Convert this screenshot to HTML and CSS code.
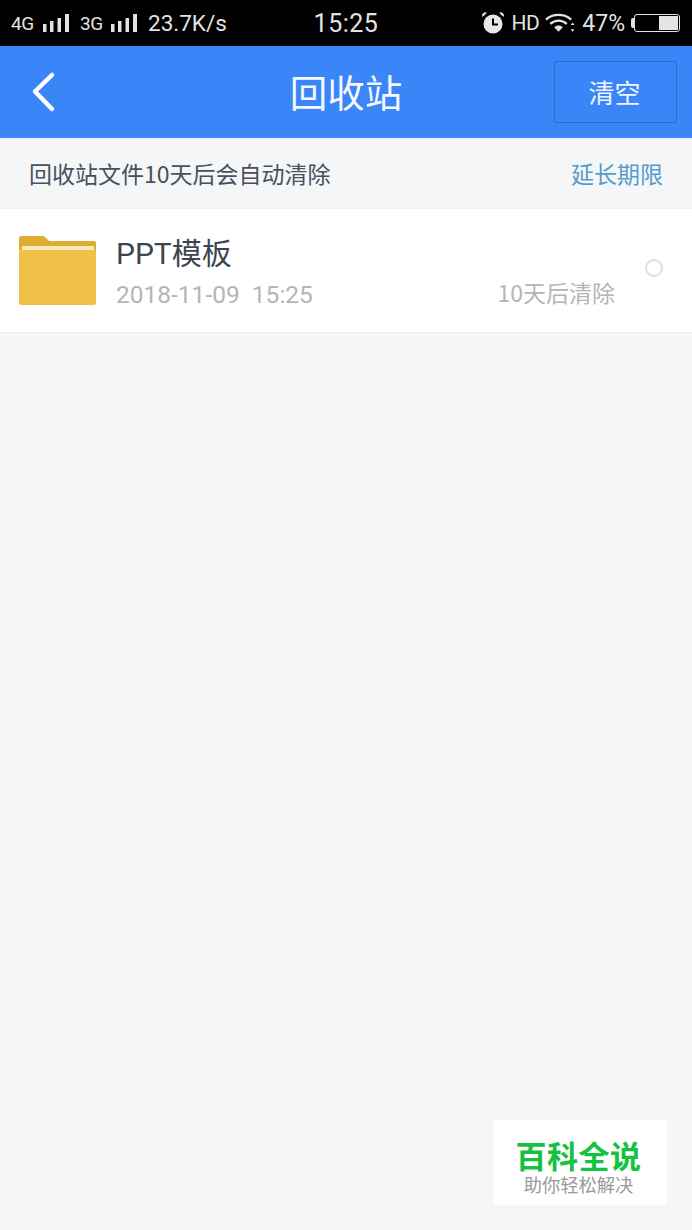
FILE: index.html
```html
<!DOCTYPE html>
<html lang="zh-CN">
  <head>
    <meta charset="UTF-8" />
    <meta name="viewport" content="width=device-width, initial-scale=1.0" />
    <title>回收站</title>
    <link rel="stylesheet" href="styles.css">
  </head>
  <body>
    <div class="status-bar">
      <div class="status-left">
        <span class="net">4G</span>
        <svg class="signal" width="27" height="18" viewBox="0 0 27 18"><path d="M1 10h3.500v8H1zM8 7h3.500v11H8zM15.500 4H19v14h-3.500zM23 0h4v18h-4z" fill="#e2e2e2"/></svg>
        <span class="net net-second">3G</span>
        <svg class="signal" width="27" height="18" viewBox="0 0 27 18"><path d="M1 10h3.500v8H1zM8 7h3.500v11H8zM15.500 4H19v14h-3.500zM23 0h4v18h-4z" fill="#e2e2e2"/></svg>
        <span class="speed">23.7K/s</span>
      </div>
      <div class="status-time">15:25</div>
      <div class="status-right">
        <svg width="24" height="24" viewBox="0 0 24 24"><circle cx="12" cy="13" r="9.500" fill="#e8e8e8"/><path d="M12 7.500V13.500H17" fill="none" stroke="#000" stroke-width="2"/><path d="M1.500 6 6 1.800 3.500 1.200 1 3.500zM22.500 6 18 1.800 20.500 1.200 23 3.500z" fill="#e8e8e8"/></svg>
        <span class="hd">HD</span>
        <svg width="30" height="22" viewBox="0 0 31 22"><g fill="none" stroke="#e2e2e2" stroke-width="2.400"><path d="M1 7.500C8 1 20 1 27 7.500"/><path d="M5.500 12C10.500 7.500 17.500 7.500 22.500 12"/></g><path d="M9.500 15.500C12 13 16 13 18.500 15.500L14 20z" fill="#e2e2e2"/><path d="M28.500 10.500l2 2.500h-4zM28.500 20l2-2.500h-4z" fill="#e2e2e2"/></svg>
        <span class="percent">47%</span>
        <div class="battery-cap"></div>
        <div class="battery"><div class="battery-level"></div></div>
      </div>
    </div>

    <div class="title-bar">
      <svg class="back" width="28" height="42" viewBox="0 0 28 42"><path d="M23 4 6 20.500 23 38" fill="none" stroke="#fff" stroke-width="4.500" stroke-linecap="round" stroke-linejoin="round"/></svg>
      <h1>回收站</h1>
      <button class="clear-button">清空</button>
    </div>

    <div class="notice">
      <span>回收站文件10天后会自动清除</span>
      <a class="extend">延长期限</a>
    </div>

    <div class="file-row">
      <svg class="folder" width="77" height="70" viewBox="0 0 77 70">
        <path d="M0 3a2 2 0 0 1 2-2h22a3 3 0 0 1 2 1l4 4h45a2 2 0 0 1 2 2v12H0z" fill="#dfae31"/>
        <rect x="3" y="11" width="72" height="4" fill="#fbeac0"/>
        <path d="M0 15h77v53a2 2 0 0 1-2 2H2a2 2 0 0 1-2-2z" fill="#efc149"/>
      </svg>
      <div class="file-info">
        <div class="file-name">PPT模板</div>
        <div class="file-meta">
          <span class="file-date">2018-11-09&nbsp;&nbsp;15:25</span>
          <span>10天后清除</span>
        </div>
      </div>
      <div class="radio"></div>
    </div>

    <div class="watermark">
      <div class="watermark-title">百科全说</div>
      <div class="watermark-sub">助你轻松解决</div>
    </div>
  </body>
</html>
```

FILE: styles.css
```css
html,
body {
  height: 100%;
}

body {
  margin: 0;
  background: #f4f6f8;
  font-family: "Noto Sans CJK SC", "Open Sans", sans-serif;
  position: relative;
  overflow: hidden;
}

/* status bar */
.status-bar {
  height: 46px;
  background: #000;
  color: #e2e2e2;
  display: flex;
  align-items: center;
  justify-content: space-between;
  padding: 0 11px;
  box-sizing: border-box;
  font-family: Roboto, sans-serif;
}

.status-left,
.status-right {
  display: flex;
  align-items: center;
  width: 260px;
}

.status-right {
  justify-content: flex-end;
}

.net {
  font-size: 19px;
  letter-spacing: -0.5px;
  width: 25px;
  margin-right: 6px;
}

.net-second {
  margin-left: 11px;
  margin-right: 5px;
}

.speed {
  font-size: 22.500px;
  margin-left: 11px;
}

.status-time {
  font-size: 25px;
  letter-spacing: 0.5px;
}

.hd {
  font-size: 21px;
  margin: 0 6px 0 7px;
  letter-spacing: -0.5px;
}

.percent {
  font-size: 23px;
  margin: 0 6px 0 7px;
}

.battery-cap {
  width: 3px;
  height: 10px;
  background: #e2e2e2;
  border-radius: 2px 0 0 2px;
}

.battery {
  width: 42px;
  height: 14px;
  border: 1px solid #e2e2e2;
  border-radius: 3px;
  padding: 1px;
  display: flex;
  justify-content: flex-end;
  margin-right: 1px;
}

.battery-level {
  width: 19px;
  background: #e4e4e4;
}

/* title bar */
.title-bar {
  height: 92px;
  background: #3a86f8;
  display: flex;
  align-items: center;
  justify-content: space-between;
  padding: 0 15px 0 29px;
  position: relative;
}

.title-bar h1 {
  position: absolute;
  left: 0;
  right: 0;
  margin: 0;
  padding-bottom: 4px;
  text-align: center;
  color: #f4f8ff;
  font-size: 37.500px;
  font-weight: 400;
  pointer-events: none;
}

.clear-button {
  width: 123px;
  height: 62px;
  background: #3a86f8;
  border: 1px solid #2a6cd0;
  border-radius: 3px;
  color: #eef5ff;
  font-family: inherit;
  font-size: 26px;
  padding: 0 2px 2px 0;
}

/* notice */
.notice {
  height: 70px;
  display: flex;
  align-items: center;
  justify-content: space-between;
  padding: 0 29px 2px;
  font-size: 23px;
  color: #48515c;
  border-top: 1px solid #e6eefb;
  box-sizing: border-box;
}

.extend {
  color: #559ccb;
}

/* file row */
.file-row {
  height: 125px;
  background: #fff;
  border-top: 1px solid #eef0f2;
  border-bottom: 1px solid #eceef0;
  display: flex;
  align-items: center;
  padding: 0 29px 0 19px;
  box-sizing: border-box;
}

.folder {
  flex: none;
  margin-right: 20px;
  margin-top: -1px;
}

.file-info {
  flex: 1;
  margin-top: 7px;
}

.file-name {
  font-family: Roboto, "Noto Sans CJK SC", sans-serif;
  font-size: 30px;
  line-height: 42px;
  color: #3d4550;
}

.file-meta {
  display: flex;
  justify-content: space-between;
  align-items: flex-start;
  font-size: 23px;
  line-height: 36px;
  color: #b5b5b5;
  margin: -1px 30px 0 0;
}

.file-date {
  font-family: Roboto, sans-serif;
  font-size: 24.500px;
  line-height: 42px;
}

.radio {
  width: 14px;
  height: 14px;
  border: 2px solid #dfdfdf;
  border-radius: 50%;
  flex: none;
  margin-top: -6px;
}

/* watermark */
.watermark {
  position: absolute;
  left: 494px;
  top: 1120px;
  width: 173px;
  height: 85px;
  background: #fff;
  text-align: center;
  padding-right: 4px;
  box-sizing: border-box;
}

.watermark-title {
  margin-top: 15px;
  font-size: 31px;
  line-height: 39px;
  font-weight: 700;
  letter-spacing: 0.5px;
  color: #14c141;
}

.watermark-sub {
  font-size: 18.300px;
  line-height: 20px;
  color: #999;
}
```
